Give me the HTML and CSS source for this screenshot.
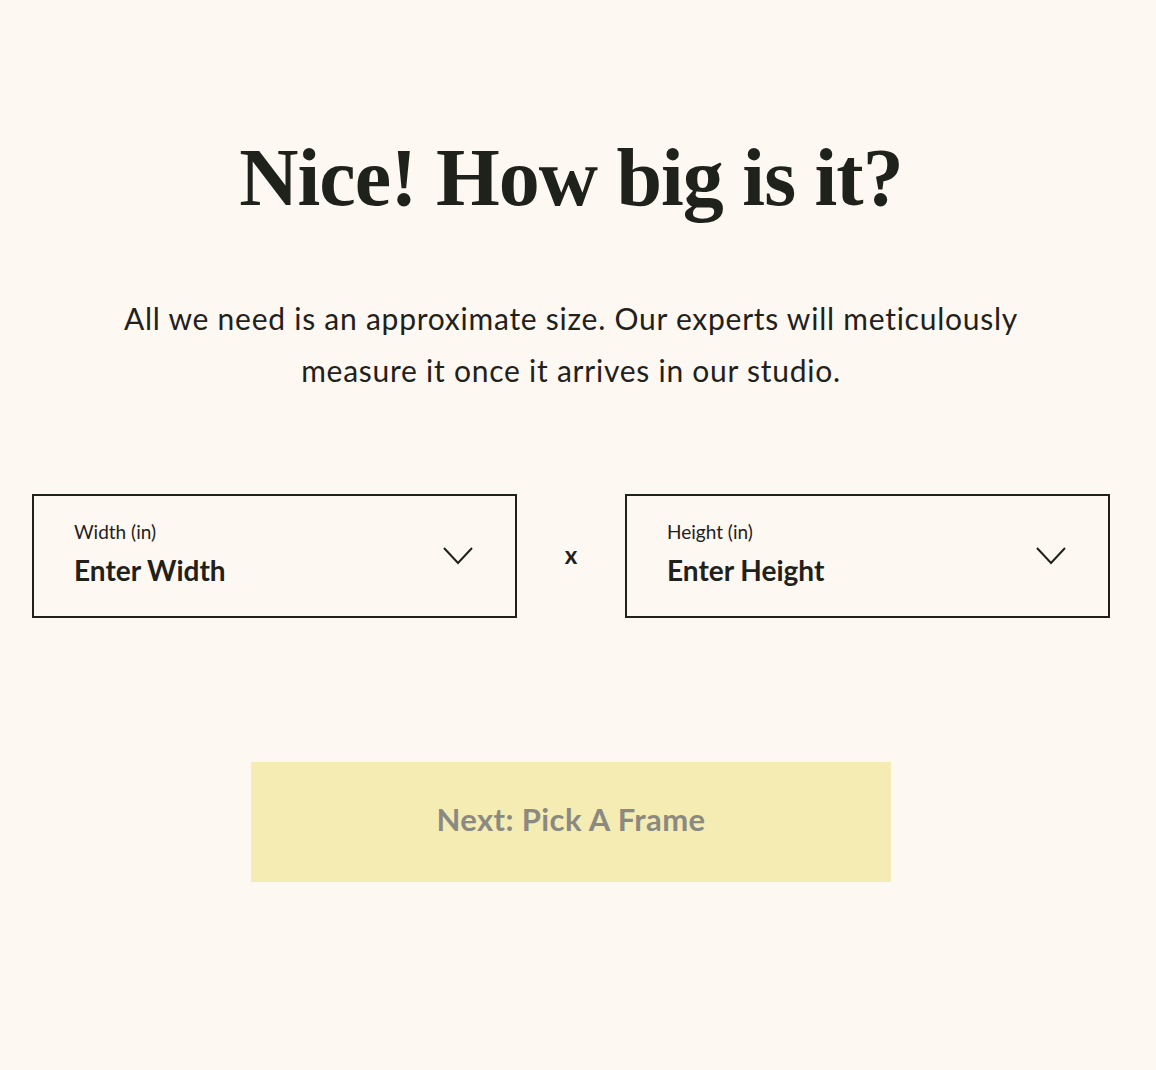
FILE: index.html
```html
<!DOCTYPE html>
<html lang="en">
<head>
<meta charset="utf-8">
<title>How big is it?</title>
<link rel="stylesheet" href="styles.css">
</head>
<body>
<main class="page">
  <h1 class="title">Nice! How big is it?</h1>
  <p class="intro">All we need is an approximate size. Our experts will meticulously measure it once it arrives in our studio.</p>
  <div class="fields">
    <div class="select">
      <div class="select-text">
        <span class="select-label">Width (in)</span>
        <span class="select-value">Enter Width</span>
      </div>
      <svg class="chev" width="30" height="18" viewBox="0 0 30 18"><path d="M1 1 L15 16 L29 1" fill="none" stroke="#1f211b" stroke-width="2"/></svg>
    </div>
    <div class="times">x</div>
    <div class="select">
      <div class="select-text">
        <span class="select-label">Height (in)</span>
        <span class="select-value">Enter Height</span>
      </div>
      <svg class="chev" width="30" height="18" viewBox="0 0 30 18"><path d="M1 1 L15 16 L29 1" fill="none" stroke="#1f211b" stroke-width="2"/></svg>
    </div>
  </div>
  <div class="actions">
    <button class="next" type="button">Next: Pick A Frame</button>
  </div>
</main>
</body>
</html>
```
FILE: styles.css
```css
html, body {
  margin: 0;
  padding: 0;
  background: #fdf8f2;
  color: #1f211b;
}
.page {
  padding: 130px 46px 0 32px;
  min-height: 1070px;
  box-sizing: border-box;
  font-family: "Lato", "Noto Sans", sans-serif;
}
.title {
  margin: 0;
  text-align: center;
  font-family: "Liberation Serif", "DejaVu Serif", serif;
  font-weight: 700;
  font-size: 82px;
  line-height: 96px;
  letter-spacing: -1px;
}
.intro {
  margin: 66px auto 0;
  width: 960px;
  text-align: center;
  font-size: 30px;
  line-height: 52px;
  letter-spacing: 0.75px;
}
.fields {
  margin-top: 98px;
  display: flex;
  align-items: center;
}
.select {
  flex: 0 0 485px;
  height: 124px;
  box-sizing: border-box;
  border: 2px solid #1f211b;
  display: flex;
  align-items: center;
  justify-content: space-between;
  padding: 0 42px 0 40px;
}
.select-text {
  display: flex;
  flex-direction: column;
  padding-bottom: 5px;
}
.select-label {
  font-size: 19px;
  line-height: 22px;
}
.select-value {
  margin-top: 11px;
  font-size: 28px;
  line-height: 32px;
  font-weight: 700;
}
.chev {
  margin-top: 0;
}
.times {
  flex: 1;
  text-align: center;
  font-size: 24px;
  font-weight: 700;
  padding-bottom: 3px;
}
.actions {
  margin-top: 144px;
  display: flex;
  justify-content: center;
}
.next {
  width: 640px;
  height: 120px;
  border: 0;
  padding: 0 0 6px;
  background: #f5ecb4;
  color: #8a8a82;
  font-family: "Lato", "Noto Sans", sans-serif;
  font-weight: 700;
  font-size: 31px;
  letter-spacing: 0.4px;
}
```
